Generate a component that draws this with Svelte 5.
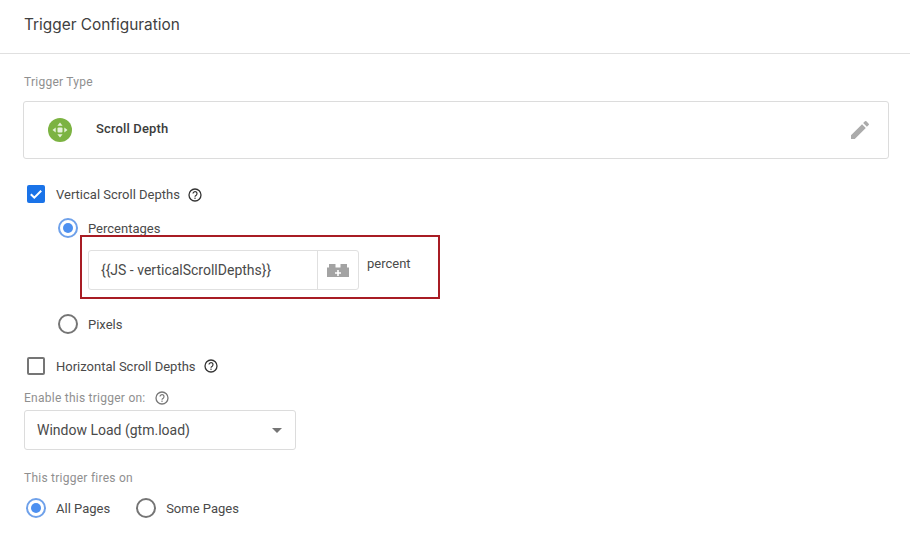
<script>
	const fires = [
		{ label: 'All Pages', on: true },
		{ label: 'Some Pages', on: false }
	];
</script>

{#snippet help()}
	<svg class="help" viewBox="0 0 14 14" width="14" height="14">
		<circle cx="7" cy="7" r="6" fill="none" stroke="currentColor" stroke-width="1.3" />
		<path d="M5 5.6a2 2 0 1 1 3.2 1.6c-.7.5-1.2.9-1.2 1.6" fill="none" stroke="currentColor" stroke-width="1.2" />
		<rect x="6.4" y="9.6" width="1.2" height="1.3" fill="currentColor" />
	</svg>
{/snippet}

{#snippet radio(on)}
	<span class="radio" class:on>
		{#if on}<span class="dot"></span>{/if}
	</span>
{/snippet}

<div class="page">
	<header>Trigger Configuration</header>

	<section>
		<div class="label type-label">Trigger Type</div>
		<div class="card">
			<span class="badge">
				<svg viewBox="0 0 24 24" width="24" height="24">
					<circle cx="12" cy="12" r="12" fill="#7cb342" />
					<rect x="9.5" y="9.5" width="5" height="5" rx="1" fill="#e6f2d9" />
					<path d="M12 4.5l2.6 3.2H9.4zM12 19.5l2.6-3.2H9.4zM4.5 12l3.2-2.6v5.2zM19.5 12l-3.2-2.6v5.2z" fill="#e6f2d9" />
				</svg>
			</span>
			<span class="type-name">Scroll Depth</span>
			<svg class="pencil" viewBox="0 0 24 24" width="24" height="24">
				<path d="M3 17.25V21h3.75L17.81 9.94l-3.75-3.75L3 17.25zM20.71 7.04a1 1 0 0 0 0-1.41l-2.34-2.34a1 1 0 0 0-1.41 0l-1.83 1.83 3.75 3.75 1.83-1.83z" fill="#ababab" />
			</svg>
		</div>

		<div class="check-row vertical">
			<span class="box checked">
				<svg viewBox="0 0 18 18" width="18" height="18">
					<path d="M3.8 9.2l3.5 3.5 6.9-7" fill="none" stroke="#fff" stroke-width="2" />
				</svg>
			</span>
			<span>Vertical Scroll Depths</span>
			{@render help()}
		</div>

		<div class="options">
			<div class="radio-row percent">
				{@render radio(true)}
				<span>Percentages</span>
			</div>
			<div class="highlight">
				<div class="var-input">
					<span class="var-value">{'{{JS - verticalScrollDepths}}'}</span>
					<span class="var-btn">
						<svg viewBox="0 0 22 13" width="22" height="13">
							<path d="M0 3.5h2V0h6.5v3.5h5V0H20v3.5h2V13H0z" fill="#a3a3a3" />
							<path d="M10.2 6h1.6v2.2H14v1.6h-2.2V12h-1.6V9.8H8V8.2h2.2z" fill="#fff" />
						</svg>
					</span>
				</div>
				<span class="unit">percent</span>
			</div>
			<div class="radio-row pixels">
				{@render radio(false)}
				<span>Pixels</span>
			</div>
		</div>

		<div class="check-row horizontal">
			<span class="box"></span>
			<span>Horizontal Scroll Depths</span>
			{@render help()}
		</div>

		<div class="label enable-label">
			<span>Enable this trigger on:</span>
			<span class="muted-help">{@render help()}</span>
		</div>
		<div class="select">
			<span>Window Load (gtm.load)</span>
			<span class="caret"></span>
		</div>

		<div class="label fires-label">This trigger fires on</div>
		<div class="fires">
			{#each fires as f}
				<div class="radio-row">
					{@render radio(f.on)}
					<span>{f.label}</span>
				</div>
			{/each}
		</div>
	</section>
</div>

<style>
	:global(body) {
		background: #fff;
	}
	.page {
		width: 910px;
		height: 551px;
		overflow: hidden;
		box-sizing: border-box;
		font-family: Roboto, "Liberation Sans", sans-serif;
		font-size: 13px;
		color: #4a4a4a;
	}
	header {
		height: 54px;
		box-sizing: border-box;
		border-bottom: 1px solid #e0e0e0;
		padding: 15px 24px 0;
		font-family: Inter, Roboto, sans-serif;
		font-size: 15.4px;
		line-height: 20px;
		color: #404040;
	}
	section {
		padding-left: 24px;
	}
	.label {
		font-size: 12px;
		line-height: 14px;
		color: #8f8f8f;
		letter-spacing: 0.25px;
	}
	.type-label {
		margin-top: 21px;
	}
	.card {
		display: flex;
		align-items: center;
		box-sizing: border-box;
		width: 866px;
		height: 58px;
		margin: 12px 0 0 -1px;
		border: 1px solid #dcdcdc;
		border-radius: 3px;
		padding: 0 16px 0 24px;
	}
	.badge {
		display: flex;
		width: 24px;
		height: 24px;
	}
	.type-name {
		margin: 0 0 4px 24px;
		font-weight: 500;
		letter-spacing: 0.15px;
		color: #3c3c3c;
	}
	.pencil {
		margin: 0 0 1px auto;
	}
	.check-row {
		display: flex;
		align-items: center;
		height: 18px;
		margin-left: 3px;
	}
	.vertical {
		margin-top: 26px;
	}
	.vertical .help {
		margin-top: 2px;
	}
	.horizontal {
		margin-top: 23px;
	}
	.box {
		box-sizing: border-box;
		width: 18px;
		height: 18px;
		margin-right: 11px;
		border: 2px solid #757575;
		border-radius: 2px;
	}
	.box.checked {
		border: 0;
		background: #1a73e8;
	}
	.box svg {
		display: block;
	}
	.help {
		margin-left: 8px;
		color: #333;
	}
	.options {
		margin-left: 34px;
	}
	.radio-row {
		display: flex;
		align-items: center;
		gap: 10px;
		height: 20px;
	}
	.percent {
		margin-top: 15px;
	}
	.pixels {
		margin-top: 24px;
	}
	.radio {
		display: flex;
		align-items: center;
		justify-content: center;
		box-sizing: border-box;
		width: 20px;
		height: 20px;
		border: 2px solid #757575;
		border-radius: 50%;
	}
	.radio.on {
		border-color: #6fa1ea;
	}
	.dot {
		width: 10px;
		height: 10px;
		border-radius: 50%;
		background: #4d90f0;
	}
	.highlight {
		position: relative;
		display: flex;
		margin: 12px 0 0 30px;
		height: 40px;
		align-items: flex-start;
	}
	/* red annotation box drawn over the field */
	.highlight::before {
		content: "";
		position: absolute;
		left: -8px;
		top: -15px;
		width: 360px;
		height: 64px;
		box-sizing: border-box;
		border: 2px solid #a81c24;
		pointer-events: none;
	}
	.var-input {
		display: flex;
		box-sizing: border-box;
		width: 271px;
		height: 40px;
		border: 1px solid #e0e0e0;
		border-radius: 3px;
	}
	.var-value {
		flex: 1;
		padding-left: 12px;
		line-height: 38px;
		font-size: 14px;
		color: #4a4a4a;
	}
	.var-btn {
		display: flex;
		align-items: center;
		justify-content: center;
		width: 40px;
		border-left: 1px solid #e0e0e0;
	}
	.unit {
		margin: 7px 0 0 8px;
		line-height: 14px;
	}
	.enable-label {
		display: flex;
		align-items: center;
		margin-top: 16px;
	}
	.muted-help {
		display: flex;
		color: #777;
	}
	.muted-help :global(.help) {
		margin-left: 9px;
		color: #777;
	}
	.select {
		display: flex;
		align-items: center;
		box-sizing: border-box;
		width: 272px;
		height: 40px;
		margin-top: 5px;
		border: 1px solid #dcdcdc;
		border-radius: 3px;
		padding: 0 13px 0 12px;
		font-size: 14px;
		color: #4a4a4a;
	}
	.caret {
		margin-left: auto;
		border-left: 5px solid transparent;
		border-right: 5px solid transparent;
		border-top: 5px solid #757575;
	}
	.fires-label {
		margin-top: 21px;
	}
	.fires {
		display: flex;
		gap: 26px;
		margin: 13px 0 0 2px;
	}
</style>
